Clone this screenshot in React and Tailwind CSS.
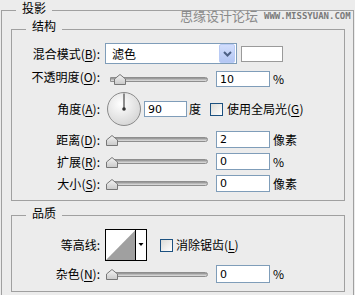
import React from "react";

const U = ({ c }) => (
  <>
    (<span className="underline underline-offset-2">{c}</span>)
  </>
);

function Slider({ thumb }) {
  return (
    <div className="relative flex h-[12px] w-[104px] items-center">
      <div className="ml-[5px] h-[5px] w-[98px] rounded-r-[3px] border border-[#8e8e8e] bg-gradient-to-b from-[#8d8d8d] via-[#b9b9b9] to-[#e2e2e2]" />
      <svg
        className="absolute top-[1px]"
        style={{ left: thumb }}
        width="12"
        height="11"
        viewBox="0 0 12 11"
      >
        <defs>
          <linearGradient id="tg" x1="0" y1="0" x2="0" y2="1">
            <stop offset="0" stopColor="#f4f4f4" />
            <stop offset="1" stopColor="#c9c9c9" />
          </linearGradient>
        </defs>
        <polygon
          points="0.5,5 6,0.5 11.5,5 11.5,10.5 0.5,10.5"
          fill="url(#tg)"
          stroke="#777"
          strokeWidth="1"
        />
      </svg>
    </div>
  );
}

function NumInput({ v, w = "w-[54px]", h = "h-[17px]" }) {
  return (
    <div
      className={`${w} ${h} flex items-center border border-[#7f9db9] bg-white pl-[3px] font-['DejaVu_Sans',sans-serif] text-[11px] leading-none text-black`}
    >
      {v}
    </div>
  );
}

function Label({ children, extra = "" }) {
  return (
    <div className={`w-[89px] shrink-0 pr-[1px] text-right ${extra}`}>{children}</div>
  );
}

function SliderRow({ label, thumb, v, unit, mt = "mt-[5px]", h = "h-[17px]", lextra = "" }) {
  return (
    <div className={`flex items-center ${mt} ${h}`}>
      <Label extra={lextra}>{label}</Label>
      <div className="ml-[4px]">
        <Slider thumb={thumb} />
      </div>
      <div className="ml-[7px]">
        <NumInput v={v} h={h} />
      </div>
      <div className="ml-[3px]">{unit}</div>
    </div>
  );
}

function Checkbox() {
  return (
    <div className="h-[13px] w-[13px] border border-[#1c5180] bg-gradient-to-br from-[#dcdcd7] to-white" />
  );
}

export default function App() {
  return (
    <div className="relative h-[295px] w-[355px] overflow-hidden bg-[#ececec] pl-[1px] pt-[10px] font-['Noto_Sans_CJK_SC',sans-serif] text-[12px] leading-[16px] text-black">
      <div className="w-[353px] border border-[#a0a0a0] pb-[40px]">
        <div className="-mt-[11px] ml-[14px] w-fit bg-[#ececec] px-[6px]">投影</div>

        {/* 结构 */}
        <div className="ml-[9px] mt-[13px] w-[334px] border border-[#a0a0a0] pb-[8px]">
          <div className="-mt-[12px] ml-[14px] w-fit bg-[#ececec] px-[6px]">结构</div>

          <div className="mt-[9px] flex h-[21px] items-center">
            <Label>
              混合模式<U c="B" />:
            </Label>
            <div className="ml-[4px] flex h-[21px] w-[132px] items-center justify-between border border-[#7f9db9] bg-white pl-[6px] pr-[1px]">
              <span>滤色</span>
              <div className="flex h-[19px] w-[16px] items-center justify-center rounded-[2px] border border-[#b9cbf5] bg-gradient-to-b from-[#d2defc] to-[#b3c6f3]">
                <svg width="9" height="6" viewBox="0 0 9 6">
                  <polyline points="1,1 4.5,4.5 8,1" fill="none" stroke="#4d6185" strokeWidth="2" />
                </svg>
              </div>
            </div>
            <div className="ml-[4px] h-[16px] w-[42px] border border-[#9a9a9a] bg-white" />
          </div>

          <SliderRow
            label={<>不透明度<U c="O" />:</>}
            thumb="9px"
            v="10"
            unit="%"
            mt="mt-[7px]"
            h="h-[16px]"
            lextra="mb-[5px]"
          />

          <div className="mt-[5px] flex h-[34px] items-center">
            <Label>
              角度<U c="A" />:
            </Label>
            <svg className="ml-[5px]" width="36" height="36" viewBox="0 0 36 36">
              <defs>
                <radialGradient id="dg" cx="0.4" cy="0.35" r="0.7">
                  <stop offset="0" stopColor="#ffffff" />
                  <stop offset="1" stopColor="#d4d4d4" />
                </radialGradient>
              </defs>
              <circle cx="18" cy="18" r="16.5" fill="url(#dg)" stroke="#8a8a8a" strokeWidth="1" />
              <line x1="18" y1="18" x2="18" y2="2.5" stroke="#555" strokeWidth="1.3" />
              <circle cx="18" cy="18" r="1.8" fill="#333" />
            </svg>
            <div className="ml-[2px]">
              <NumInput v="90" w="w-[43px]" h="h-[16px]" />
            </div>
            <div className="ml-[2px]">度</div>
            <div className="ml-[9px]">
              <Checkbox />
            </div>
            <div className="ml-[4px]">
              使用全局光<U c="G" />
            </div>
          </div>

          <SliderRow label={<>距离<U c="D" />:</>} thumb="1px" v="2" unit="像素" />
          <SliderRow label={<>扩展<U c="R" />:</>} thumb="1px" v="0" unit="%" />
          <SliderRow label={<>大小<U c="S" />:</>} thumb="1px" v="0" unit="像素" />
        </div>

        {/* 品质 */}
        <div className="ml-[9px] mt-[14px] w-[334px] border border-[#a0a0a0] pb-[8px]">
          <div className="-mt-[11px] ml-[14px] w-fit bg-[#ececec] px-[6px]">品质</div>

          <div className="mt-[8px] flex h-[32px] items-center">
            <Label>等高线:</Label>
            <svg className="ml-[4px]" width="42" height="32" viewBox="0 0 42 32">
              <rect x="0.5" y="0.5" width="41" height="31" fill="#fff" stroke="#000" />
              <polygon points="1,31 30.5,1 30.5,31" fill="#a0a0a0" />
              <line x1="30.5" y1="0" x2="30.5" y2="32" stroke="#000" />
              <polygon points="33.5,14 38.5,14 36,17" fill="#000" />
            </svg>
            <div className="ml-[13px]">
              <Checkbox />
            </div>
            <div className="ml-[3px]">
              消除锯齿<U c="L" />
            </div>
          </div>

          <SliderRow label={<>杂色<U c="N" />:</>} thumb="1px" v="0" unit="%" mt="mt-[4px]" h="h-[18px]" />
        </div>
      </div>

      <div className="absolute left-[180px] top-[8px] flex items-center gap-[6px] text-[#8a8a8a]">
        <span className="text-[13px] leading-[16px]">思缘设计论坛</span>
        <span className="font-['DejaVu_Sans_Mono',monospace] text-[9px] font-bold leading-[16px] text-[#7a7a7a]">
          WWW.MISSYUAN.COM
        </span>
      </div>
    </div>
  );
}
